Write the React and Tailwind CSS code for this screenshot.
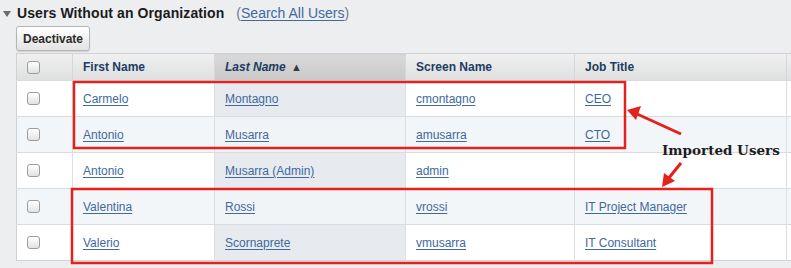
import React from "react";

const rows = [
  ["Carmelo", "Montagno", "cmontagno", "CEO"],
  ["Antonio", "Musarra", "amusarra", "CTO"],
  ["Antonio", "Musarra (Admin)", "admin", ""],
  ["Valentina", "Rossi", "vrossi", "IT Project Manager"],
  ["Valerio", "Scornaprete", "vmusarra", "IT Consultant"],
];

function Check() {
  return (
    <div className="flex items-center pl-[10px]">
      <span className="block w-[13px] h-[13px] rounded-[3px] border border-[#9c9c9c] bg-gradient-to-b from-white to-[#e2e2e2] shadow-[inset_0_1px_0_#fff]" />
    </div>
  );
}

function Link({ children }) {
  return <a className="text-[#41699d] underline decoration-[#41699d] underline-offset-[2px]">{children}</a>;
}

export default function App() {
  return (
    <div
      className="relative w-[791px] h-[268px] overflow-hidden bg-[#edeef0] text-[12px]"
      style={{ fontFamily: '"Liberation Sans", Arial, sans-serif' }}
    >
      <div className="flex items-center h-[26px] pl-[3px]">
        <span className="w-0 h-0 border-l-[4px] border-r-[4px] border-t-[6px] border-l-transparent border-r-transparent border-t-[#6b6b6b] mr-[6px] mt-[1px]" />
        <span className="font-bold text-[14px] text-[#1b1b1b] tracking-[0.1px]">Users Without an Organization</span>
        <span className="ml-[12px] text-[14px] text-[#6e7a88]">
          (<Link>Search All Users</Link>)
        </span>
      </div>
      <div className="pl-[16px] h-[27px]">
        <button className="h-[25px] px-[6px] rounded-[3px] border border-[#b4b4b4] bg-gradient-to-b from-white to-[#e3e3e3] font-bold text-[12px] text-[#2b2b2b] shadow-[0_1px_1px_rgba(0,0,0,0.12)]">
          Deactivate
        </button>
      </div>
      <div className="pl-[16px]">
        <table className="border-collapse table-fixed w-[830px] border border-[#cfd1d4]">
          <colgroup>
            <col className="w-[56px]" />
            <col className="w-[142px]" />
            <col className="w-[191px]" />
            <col className="w-[169px]" />
            <col className="w-[212px]" />
            <col className="w-[60px]" />
          </colgroup>
          <thead>
            <tr className="h-[27px] bg-gradient-to-b from-[#f0f0f0] to-[#dedfe0] text-[#1d3c63] font-bold text-left">
              <th className="border-r border-[#d6d7d9] font-normal"><Check /></th>
              <th className="border-r border-[#d6d7d9] pl-[10px]">First Name</th>
              <th className="border-r border-[#d6d7d9] pl-[10px] italic bg-gradient-to-b from-[#d9d9d9] to-[#c9c9c9]">
                Last Name <span className="not-italic text-[11px] text-[#3a3a3a] ml-[2px]">▲</span>
              </th>
              <th className="border-r border-[#d6d7d9] pl-[10px]">Screen Name</th>
              <th className="border-r border-[#d6d7d9] pl-[10px]">Job Title</th>
              <th></th>
            </tr>
          </thead>
          <tbody>
            {rows.map((r, i) => {
              const alt = i % 2 === 1;
              return (
                <tr key={i} className={`h-[36px] border-t border-[#d9dcdf] ${alt ? "bg-[#f3f6f9]" : "bg-white"}`}>
                  <td className="border-r border-[#dcdee1]"><Check /></td>
                  <td className="border-r border-[#dcdee1] pl-[10px]"><Link>{r[0]}</Link></td>
                  <td className={`border-r border-[#dcdee1] pl-[10px] ${alt ? "bg-[#f1f4f7]" : "bg-[#e7ebef]"}`}><Link>{r[1]}</Link></td>
                  <td className="border-r border-[#dcdee1] pl-[10px]"><Link>{r[2]}</Link></td>
                  <td className="border-r border-[#dcdee1] pl-[10px]">{r[3] && <Link>{r[3]}</Link>}</td>
                  <td></td>
                </tr>
              );
            })}
          </tbody>
        </table>
      </div>

      <svg className="absolute inset-0 pointer-events-none" width="791" height="268">
        <rect x="74" y="82" width="551" height="66" fill="none" stroke="#e3211d" strokeWidth="2.5" />
        <rect x="72" y="189" width="640" height="74" fill="none" stroke="#e3211d" strokeWidth="2.5" />
        <line x1="681" y1="134" x2="636" y2="113.5" stroke="#e3211d" strokeWidth="3" />
        <polygon points="627,110 641,106 636,120" fill="#e3211d" />
        <line x1="681" y1="163" x2="668" y2="179" stroke="#e3211d" strokeWidth="3" />
        <polygon points="662,187 664,173 675,181" fill="#e3211d" />
      </svg>
      <div
        className="absolute left-[662px] top-[144px] text-[13.5px] font-bold text-[#1d1d1d] leading-none"
        style={{ fontFamily: '"DejaVu Serif", serif' }}
      >
        Imported Users
      </div>
    </div>
  );
}
